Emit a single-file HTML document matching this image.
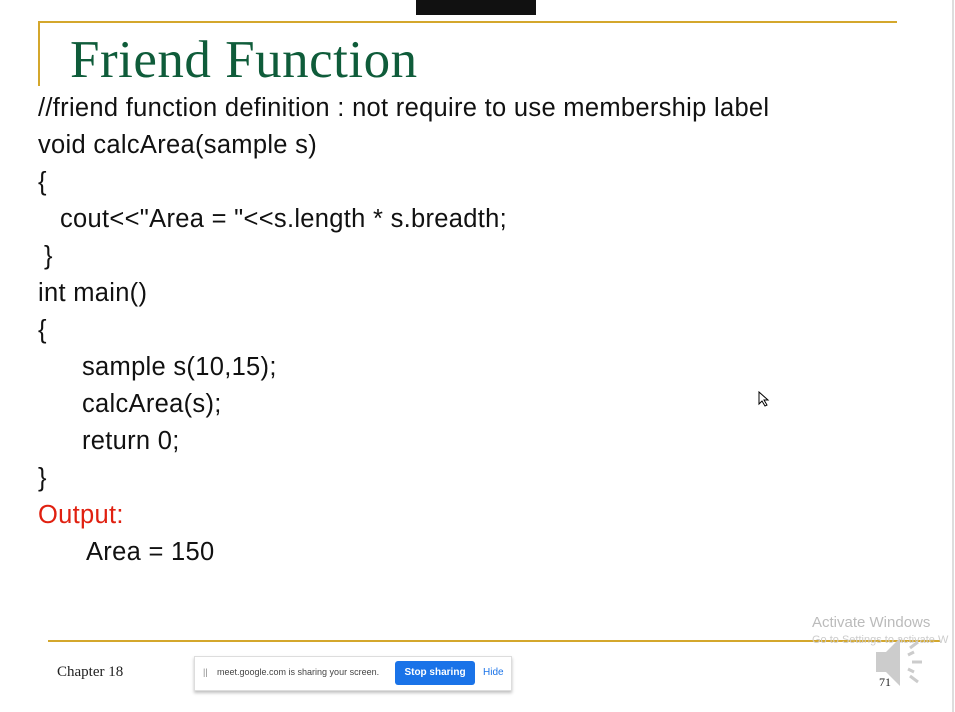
<!DOCTYPE html>
<html><head><style>
body{margin:0;width:955px;height:712px;background:#fff;position:relative;overflow:hidden;font-family:"Liberation Sans",Arial,sans-serif}
.a{position:absolute;white-space:pre}
.c{font-size:25.5px;color:#111;line-height:28px;letter-spacing:0.3px}
</style></head><body>
<div class="a" style="left:416px;top:0;width:120px;height:15px;background:#111"></div>
<div class="a" style="left:38px;top:21px;width:859px;height:2px;background:#d4a72c"></div>
<div class="a" style="left:38px;top:21px;width:2px;height:65px;background:#d4a72c"></div>
<div class="a" style="left:70px;top:30px;font-family:'Liberation Serif',serif;font-size:53px;color:#0f5c3a;line-height:60px;letter-spacing:0.5px">Friend Function</div>
<div class="a c" style="left:38px;top:94px">//friend function definition : not require to use membership label</div>
<div class="a c" style="left:38px;top:131px">void calcArea(sample s)</div>
<div class="a c" style="left:38px;top:168px">{</div>
<div class="a c" style="left:60px;top:205px">cout&lt;&lt;"Area = "&lt;&lt;s.length * s.breadth;</div>
<div class="a c" style="left:44px;top:242px">}</div>
<div class="a c" style="left:38px;top:279px">int main()</div>
<div class="a c" style="left:38px;top:316px">{</div>
<div class="a c" style="left:82px;top:353px">sample s(10,15);</div>
<div class="a c" style="left:82px;top:390px">calcArea(s);</div>
<div class="a c" style="left:82px;top:427px">return 0;</div>
<div class="a c" style="left:38px;top:464px">}</div>
<div class="a c" style="left:38px;top:501px;color:#e02010">Output:</div>
<div class="a c" style="left:86px;top:538px">Area = 150</div>
<div class="a" style="left:48px;top:640px;width:892px;height:2px;background:#d4a72c"></div>
<div class="a" style="left:57px;top:664px;font-family:'Liberation Serif',serif;font-size:15px;color:#222">Chapter 18</div>
<div class="a" style="left:879px;top:675px;font-family:'Liberation Serif',serif;font-size:12px;color:#222">71</div>
<div class="a" style="left:812px;top:614px;font-size:15px;color:#bbb">Activate Windows</div>
<div class="a" style="left:812px;top:634px;font-size:11px;color:#ccc">Go to Settings to activate W</div>
<div class="a" style="left:194px;top:656px;width:316px;height:33px;background:#fff;border:1px solid #ddd;box-shadow:0 2px 3px rgba(0,0,0,.25)"></div>
<div class="a" style="left:203px;top:667px;font-size:9px;color:#888">||</div>
<div class="a" style="left:217px;top:667px;font-size:9px;color:#444">meet.google.com is sharing your screen.</div>
<div class="a" style="left:395px;top:661px;width:80px;height:24px;background:#1a73e8;border-radius:3px;color:#fff;font-size:10px;font-weight:bold;text-align:center;line-height:24px">Stop sharing</div>
<div class="a" style="left:483px;top:667px;font-size:10px;color:#1a73e8">Hide</div>
<svg class="a" style="left:872px;top:630px" width="65" height="62"><polygon points="4,22 14,22 28,8 28,56 14,42 4,42" fill="#ccc"/><path d="M38 18 l8 -6 M40 32 h10 M38 46 l8 6 M36 25 l6 -3 M36 39 l6 3" stroke="#ccc" stroke-width="3"/></svg>
<div class="a" style="left:952px;top:0;width:2px;height:712px;background:#ddd"></div>
<svg class="a" style="left:758px;top:391px" width="12" height="16"><path d="M1 1 L1 13 L4 10 L7 15 L9 14 L6 9 L10 9 Z" fill="#fff" stroke="#000"/></svg>
</body></html>
